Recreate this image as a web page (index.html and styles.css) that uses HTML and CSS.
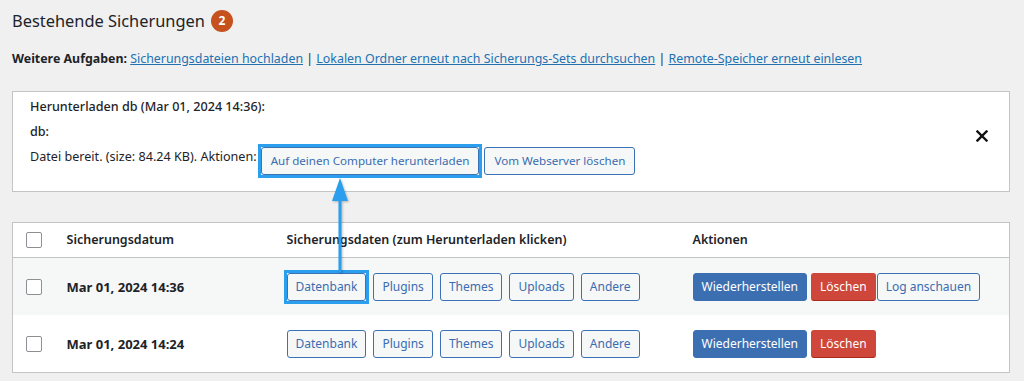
FILE: index.html
```html
<!DOCTYPE html>
<html lang="de">
<head>
    <meta charset="UTF-8">
    <meta name="viewport" content="width=device-width, initial-scale=1.0">
    <title>Bestehende Sicherungen</title>
    <link rel="stylesheet" href="styles.css">
</head>
<body>
    <div class="wrap">
        <h2 class="page-title">Bestehende Sicherungen <span class="count-badge">2</span></h2>
        <p class="tasks">
            <strong>Weitere Aufgaben:</strong>
            <a href="#">Sicherungsdateien hochladen</a> |
            <a href="#">Lokalen Ordner erneut nach Sicherungs-Sets durchsuchen</a> |
            <a href="#">Remote-Speicher erneut einlesen</a>
        </p>

        <div class="notice">
            <p class="notice-title">Herunterladen db (Mar 01, 2024 14:36):</p>
            <p class="notice-file">db:</p>
            <div class="notice-actions">
                <span class="notice-text">Datei bereit. (size: 84.24 KB). Aktionen:</span>
                <button class="btn highlight">Auf deinen Computer herunterladen</button>
                <button class="btn">Vom Webserver löschen</button>
            </div>
            <button class="notice-close" aria-label="Schließen">
                <svg width="12" height="12" viewBox="0 0 12 12">
                    <path d="M1.5 1.5 L10.5 10.5 M10.5 1.5 L1.5 10.5" stroke="#111" stroke-width="2.4" stroke-linecap="square"/>
                </svg>
            </button>
        </div>

        <table class="backups">
            <colgroup>
                <col class="col-check">
                <col class="col-date">
                <col class="col-data">
                <col class="col-actions">
            </colgroup>
            <thead>
                <tr>
                    <th class="check"><input type="checkbox"></th>
                    <th>Sicherungsdatum</th>
                    <th>Sicherungsdaten (zum Herunterladen klicken)</th>
                    <th>Aktionen</th>
                </tr>
            </thead>
            <tbody>
                <tr class="alt">
                    <td class="check"><input type="checkbox"></td>
                    <td class="date">Mar 01, 2024 14:36</td>
                    <td>
                        <div class="btn-row">
                            <button class="btn highlight">Datenbank</button>
                            <button class="btn">Plugins</button>
                            <button class="btn">Themes</button>
                            <button class="btn">Uploads</button>
                            <button class="btn">Andere</button>
                        </div>
                    </td>
                    <td>
                        <div class="btn-row tight">
                            <button class="btn primary">Wiederherstellen</button>
                            <button class="btn danger">Löschen</button>
                            <button class="btn log">Log anschauen</button>
                        </div>
                    </td>
                </tr>
                <tr>
                    <td class="check"><input type="checkbox"></td>
                    <td class="date">Mar 01, 2024 14:24</td>
                    <td>
                        <div class="btn-row">
                            <button class="btn">Datenbank</button>
                            <button class="btn">Plugins</button>
                            <button class="btn">Themes</button>
                            <button class="btn">Uploads</button>
                            <button class="btn">Andere</button>
                        </div>
                    </td>
                    <td>
                        <div class="btn-row tight">
                            <button class="btn primary">Wiederherstellen</button>
                            <button class="btn danger">Löschen</button>
                        </div>
                    </td>
                </tr>
            </tbody>
        </table>
    </div>

    <!-- annotation arrow from the Datenbank button up to the download button -->
    <svg class="pointer" width="24" height="98" viewBox="0 0 24 98">
        <path d="M12 2 L4 25 L10.5 25 L10.5 96 L13.5 96 L13.5 25 L20 25 Z" fill="#2b9fee"/>
    </svg>
</body>
</html>
```

FILE: styles.css
```css
body {
    margin: 0;
    background-color: #f0f0f1;
    color: #1d2327;
    font-family: "Noto Sans", "Open Sans", sans-serif;
    font-size: 12.6px;
    line-height: 18px;
    position: relative;
    height: 381px;
    overflow: hidden;
}

.wrap {
    padding: 9px 14px 0 12px;
}

.page-title {
    margin: 0;
    font-size: 16.4px;
    font-weight: 400;
    line-height: 24px;
    display: flex;
    align-items: center;
    gap: 6px;
    padding-left: 0;
}

.count-badge {
    display: inline-flex;
    align-items: center;
    justify-content: center;
    width: 22px;
    height: 22px;
    border-radius: 50%;
    background-color: #c5511f;
    color: white;
    font-size: 12px;
    font-weight: 700;
}

.tasks {
    margin: 17px 0 0 0;
    font-size: 12.4px;
}

.tasks a {
    color: #2271b1;
}

.notice {
    position: relative;
    margin-top: 23px;
    background: white;
    border: 1px solid #c3c4c7;
    padding: 6px 16px 16px 17px;
}

.notice p {
    margin: 0;
}

.notice-title,
.notice-file {
    font-weight: 500;
}

.notice-file {
    margin-top: 7px !important;
}

.notice-actions {
    display: flex;
    align-items: flex-start;
    margin-top: 6px;
}

.notice-text {
    padding-top: 1px;
    margin-right: 4px;
}

.notice-actions .btn {
    font-size: 11.6px;
    padding: 0 9px;
}

.notice-actions .btn + .btn {
    margin-left: 5px;
}

.notice-close {
    position: absolute;
    right: 21px;
    top: 38px;
    background: none;
    border: none;
    padding: 0;
    cursor: pointer;
}

.btn {
    position: relative;
    height: 28px;
    padding: 0 8px;
    font-family: inherit;
    font-size: 12px;
    line-height: 26px;
    border: 1px solid #3a72b5;
    border-radius: 3px;
    background-color: #f6f7f7;
    color: #3a6db0;
    cursor: pointer;
    white-space: nowrap;
}

/* annotation frame around the buttons the arrow points at */
.btn.highlight::after {
    content: "";
    position: absolute;
    inset: -4px;
    border: 3px solid #2b9fee;
}

.btn.primary {
    background-color: #3c6fb2;
    border-color: #3c6fb2;
    color: white;
}

.btn.danger {
    background-color: #cf463b;
    border-color: #cf463b;
    border-bottom-color: #a8291e;
    color: white;
}

.backups {
    width: 100%;
    margin-top: 30px;
    border-collapse: collapse;
    table-layout: fixed;
    background: white;
    border: 1px solid #c3c4c7;
}

.col-check {
    width: 54px;
}

.col-date {
    width: 220px;
}

.col-data {
    width: 406px;
}

.backups th {
    text-align: left;
    font-weight: 600;
    font-size: 12.5px;
    height: 34px;
    padding: 0;
    border-bottom: 1px solid #c3c4c7;
}

.backups td {
    height: 57px;
    padding: 0;
}

.backups .check {
    padding-left: 13px;
}

.backups tr.alt td {
    background-color: #f6f7f7;
}

.date {
    font-weight: 700;
    font-size: 13px;
}

input[type="checkbox"] {
    appearance: none;
    display: block;
    width: 16px;
    height: 16px;
    margin: 0;
    border: 1px solid #8c8f94;
    border-radius: 2px;
    background: white;
}

.btn-row {
    display: flex;
    gap: 7px;
}

.btn-row.tight {
    gap: 4px;
}

.btn-row .btn.log {
    margin-left: -3px;
}

.pointer {
    position: absolute;
    left: 328px;
    top: 176px;
    filter: drop-shadow(1px 1px 1px rgba(0, 0, 0, 0.25));
}
```
